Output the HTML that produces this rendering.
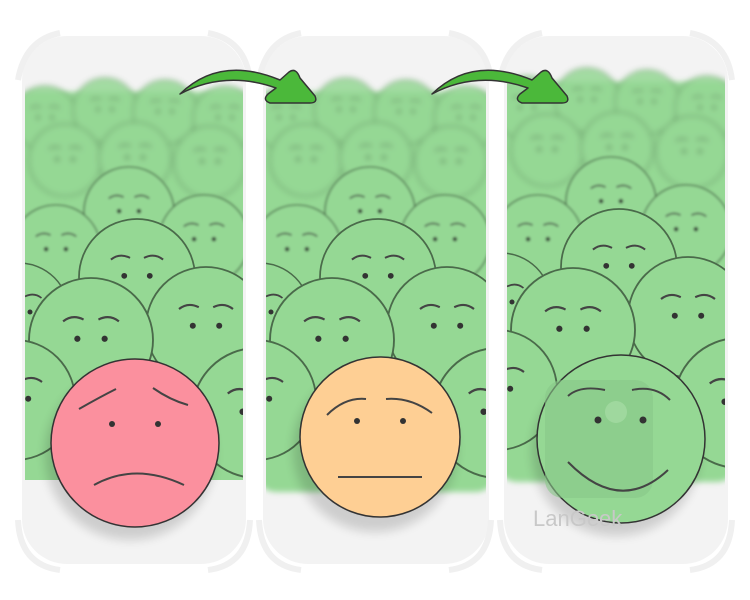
<!DOCTYPE html>
<html><head><style>html,body{margin:0;padding:0;background:#fff;width:750px;height:600px;overflow:hidden}</style></head>
<body>
<svg width="750" height="600" viewBox="0 0 750 600" xmlns="http://www.w3.org/2000/svg">
<defs>
<filter id="b3" x="-20%" y="-20%" width="140%" height="140%"><feGaussianBlur stdDeviation="3"/></filter>
<filter id="b1" x="-20%" y="-20%" width="140%" height="140%"><feGaussianBlur stdDeviation="1.2"/></filter>
<filter id="sh" x="-30%" y="-30%" width="160%" height="160%"><feGaussianBlur stdDeviation="5"/></filter>
<g id="gf">
 <circle r="1" fill="#95d894" stroke="#4a6a4a" stroke-width="0.03"/>
 <path d="M-0.45,-0.3 Q-0.3,-0.42 -0.12,-0.33 M0.12,-0.33 Q0.3,-0.42 0.45,-0.3" fill="none" stroke="#444" stroke-width="0.035"/>
 <circle cx="-0.22" cy="-0.02" r="0.05" fill="#333"/><circle cx="0.22" cy="-0.02" r="0.05" fill="#333"/>
</g>
<g id="crowd">
 <rect x="-10" y="92" width="240" height="400" rx="20" fill="#95d894" filter="url(#b3)"/>
 <g filter="url(#b3)" opacity="0.85">
  <use href="#gf" transform="translate(20,118) scale(32)"/>
  <use href="#gf" transform="translate(80,110) scale(32)"/>
  <use href="#gf" transform="translate(140,112) scale(32)"/>
  <use href="#gf" transform="translate(200,118) scale(32)"/>
  <use href="#gf" transform="translate(40,160) scale(36)"/>
  <use href="#gf" transform="translate(110,158) scale(36)"/>
  <use href="#gf" transform="translate(185,162) scale(36)"/>
 </g>
 <g filter="url(#b1)">
  <use href="#gf" transform="translate(104,212) scale(45)"/>
  <use href="#gf" transform="translate(179,240) scale(45)"/>
  <use href="#gf" transform="translate(31,250) scale(45)"/>
 </g>
 <use href="#gf" transform="translate(112,277) scale(58)"/>
 <use href="#gf" transform="translate(-6,313) scale(50)"/>
 <use href="#gf" transform="translate(181,327) scale(60)"/>
 <use href="#gf" transform="translate(66,340) scale(62)"/>
 <use href="#gf" transform="translate(-10,400) scale(60)"/>
 <use href="#gf" transform="translate(232,413) scale(65)"/>
</g>
<clipPath id="c1"><rect x="25" y="40" width="218" height="440"/></clipPath>
<clipPath id="c2"><rect x="266" y="40" width="220" height="480"/></clipPath>
<clipPath id="c3"><rect x="507" y="40" width="218" height="480"/></clipPath>
</defs>
<g fill="#f3f3f3">
 <rect x="22" y="36" width="224" height="528" rx="45"/>
 <rect x="263" y="36" width="226" height="528" rx="45"/>
 <rect x="504" y="36" width="224" height="528" rx="45"/>
</g>
<g fill="none" stroke="#f0f0f0" stroke-width="6">
 <path d="M18,80 Q25,40 60,33 M208,33 Q245,40 250,80 M18,520 Q20,565 60,570 M208,570 Q248,565 250,520"/>
 <path d="M259,80 Q266,40 301,33 M449,33 Q486,40 491,80 M259,520 Q261,565 301,570 M449,570 Q489,565 491,520"/>
 <path d="M500,80 Q507,40 542,33 M690,33 Q727,40 732,80 M500,520 Q502,565 542,570 M690,570 Q730,565 732,520"/>
</g>
<g clip-path="url(#c1)"><use href="#crowd" transform="translate(25,0)"/></g>
<g clip-path="url(#c2)"><use href="#crowd" transform="translate(266,0)"/></g>
<g clip-path="url(#c3)"><use href="#crowd" transform="translate(507,-10)"/></g>
<ellipse cx="130" cy="455" rx="85" ry="85" fill="#000" opacity="0.15" filter="url(#sh)"/>
<ellipse cx="375" cy="450" rx="82" ry="82" fill="#000" opacity="0.15" filter="url(#sh)"/>
<ellipse cx="616" cy="452" rx="84" ry="84" fill="#000" opacity="0.15" filter="url(#sh)"/>
<circle cx="135" cy="443" r="84" fill="#fb909e" stroke="#333" stroke-width="1.5"/>
<path d="M79,409 Q100,397 116,389 M153,388 Q170,400 188,405" fill="none" stroke="#444" stroke-width="2"/>
<circle cx="112" cy="424" r="3" fill="#333"/><circle cx="158" cy="424" r="3" fill="#333"/>
<path d="M94,485 Q135,462 184,485" fill="none" stroke="#444" stroke-width="2"/>
<circle cx="380" cy="437" r="80" fill="#fecf94" stroke="#333" stroke-width="1.5"/>
<path d="M327,415 Q345,397 366,399 M386,399 Q410,397 432,413" fill="none" stroke="#444" stroke-width="2"/>
<circle cx="357" cy="421" r="3" fill="#333"/><circle cx="403" cy="421" r="3" fill="#333"/>
<path d="M338,477 L422,477" fill="none" stroke="#444" stroke-width="2"/>
<circle cx="621" cy="439" r="84" fill="#95d894" stroke="#333" stroke-width="1.5"/>
<rect x="545" y="380" width="108" height="118" rx="18" fill="#88c888" opacity="0.6"/>
<circle cx="616" cy="412" r="11" fill="#9fd89e"/>
<path d="M568,396 Q580,385 605,390 M632,390 Q655,385 670,400" fill="none" stroke="#444" stroke-width="2"/>
<circle cx="598" cy="420" r="3.5" fill="#333"/><circle cx="643" cy="420" r="3.5" fill="#333"/>
<path d="M568,462 Q620,515 668,470" fill="none" stroke="#444" stroke-width="2"/>
<text x="533" y="526" font-family="Liberation Sans, sans-serif" font-size="22" fill="#c8c8c8">LanGeek</text>
<g id="arr" fill="#4bb83a" stroke="#333" stroke-width="1.5" stroke-linejoin="round">
 <path d="M180,94 Q220,55 280,80 L289,72 Q296,67 300,78 L315,96 Q318,103 310,103 L270,103 Q262,100 268,94 L276,88 Q225,70 180,94 Z"/>
</g>
<use href="#arr" transform="translate(252,0)"/>
</svg>
</body></html>
